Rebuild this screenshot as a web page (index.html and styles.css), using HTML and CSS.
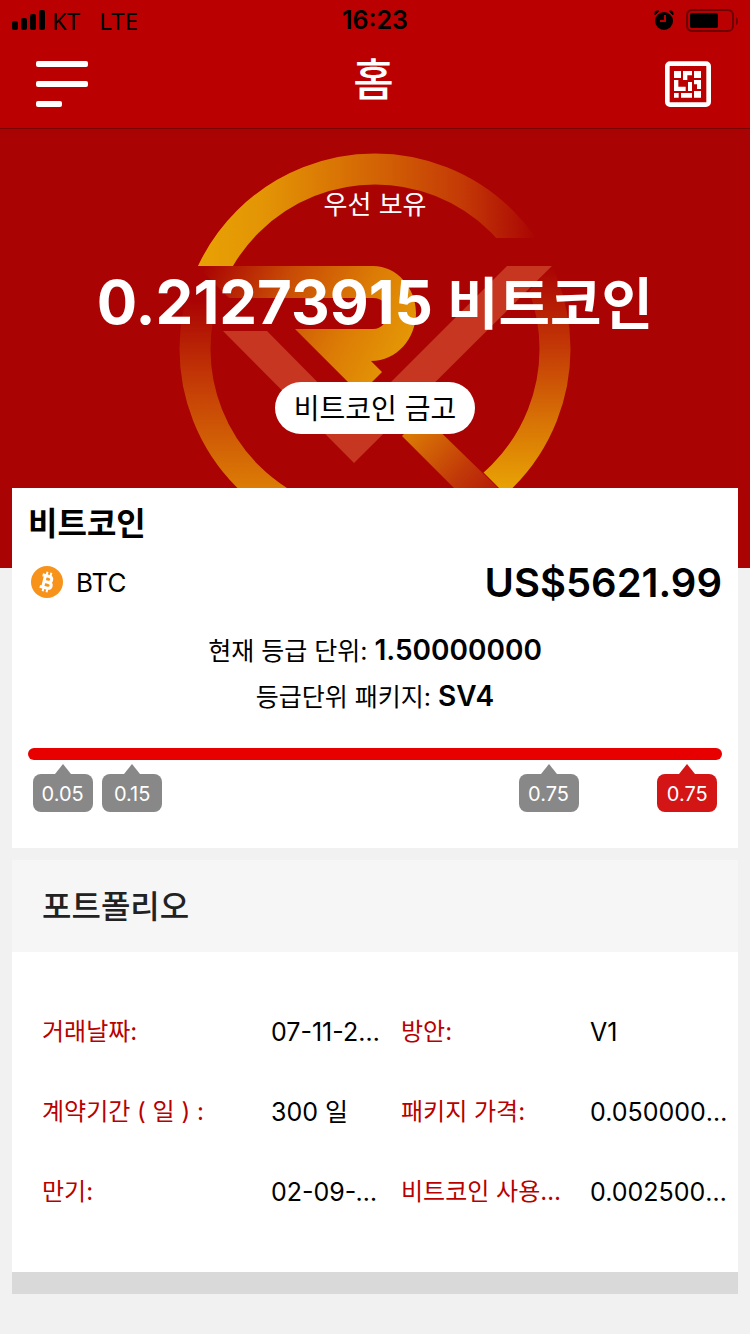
FILE: index.html
```
<!DOCTYPE html>
<html lang="ko">
<head>
    <meta charset="UTF-8">
    <meta name="viewport" content="width=device-width, initial-scale=1.0">
    <title>홈</title>
    <link rel="stylesheet" href="styles.css">
</head>
<body>
    <header class="header">
        <div class="status-bar">
            <div class="carrier">
                <svg width="33" height="20" viewBox="0 0 33 20">
                    <rect x="0" y="11" width="6" height="9" rx="2"/>
                    <rect x="9" y="8" width="6" height="12" rx="2"/>
                    <rect x="18" y="4" width="6" height="16" rx="2"/>
                    <rect x="27" y="0" width="6" height="20" rx="2"/>
                </svg>
                <span>KT</span>
                <span class="network">LTE</span>
            </div>
            <div class="time">16:23</div>
            <div class="indicators">
                <svg width="20" height="20" viewBox="0 0 20 20">
                    <circle cx="10" cy="11" r="9"/>
                    <path d="M1 5V3Q1 1 3 1H5ZM19 5V3Q19 1 17 1H15Z" stroke="#000"/>
                    <path d="M11 5V11H6" fill="none" stroke="#ba0000" stroke-width="2"/>
                </svg>
                <svg width="52" height="24" viewBox="0 0 52 24">
                    <rect x="1" y="2" width="46" height="21" rx="5" fill="none" stroke="#6c0000" stroke-width="2"/>
                    <rect x="4" y="5" width="28" height="15" rx="2"/>
                    <path d="M50 9Q52 10 52 13T50 17Z" fill="#6c0000"/>
                </svg>
            </div>
        </div>
        <nav class="navbar">
            <button class="icon-btn" aria-label="메뉴">
                <svg width="52" height="46" viewBox="0 0 52 46" fill="#fff">
                    <rect x="0" y="0" width="52" height="6" rx="2"/>
                    <rect x="0" y="20" width="52" height="6" rx="2"/>
                    <rect x="0" y="40" width="26" height="6" rx="2"/>
                </svg>
            </button>
            <h1>홈</h1>
            <button class="icon-btn" aria-label="QR 코드">
                <svg width="46" height="46" viewBox="0 0 138 138" fill="#fff">
                    <rect x="7" y="8" width="124" height="123" rx="8" fill="none" stroke="#fff" stroke-width="14"/>
                    <path d="M27 30h21v21H27zM54 30h27v13H67v14H54zM87 30h21v21H87zM27 57h13v20h22v13H27zM69 63h12v27H69zM87 57h21v27H96V70h-9zM27 96h14v14H27zM48 96h33v14H48zM87 90h21v20H87z"/>
                </svg>
            </button>
        </nav>
    </header>

    <section class="hero">
        <svg class="hero-logo" width="400" height="359" viewBox="175 129 400 359">
            <defs>
                <linearGradient id="arcTop" gradientUnits="userSpaceOnUse" x1="197" y1="0" x2="537" y2="0">
                    <stop offset="0" stop-color="#e8a204"/>
                    <stop offset="0.2" stop-color="#e39405"/>
                    <stop offset="0.55" stop-color="#d26004"/>
                    <stop offset="0.78" stop-color="#c43a06"/>
                    <stop offset="1" stop-color="#a90303"/>
                </linearGradient>
                <linearGradient id="arcLeft" gradientUnits="userSpaceOnUse" x1="0" y1="300" x2="0" y2="488">
                    <stop offset="0" stop-color="#a90303"/>
                    <stop offset="0.4" stop-color="#c23606"/>
                    <stop offset="1" stop-color="#dc7c05"/>
                </linearGradient>
                <linearGradient id="arcRight" gradientUnits="userSpaceOnUse" x1="0" y1="266" x2="0" y2="488">
                    <stop offset="0" stop-color="#a90303"/>
                    <stop offset="0.35" stop-color="#c23606"/>
                    <stop offset="0.7" stop-color="#d87305"/>
                    <stop offset="1" stop-color="#e8a204"/>
                </linearGradient>
                <linearGradient id="letter" gradientUnits="userSpaceOnUse" x1="205" y1="266" x2="400" y2="370">
                    <stop offset="0" stop-color="#a90303"/>
                    <stop offset="0.35" stop-color="#c84a05"/>
                    <stop offset="0.7" stop-color="#dc7c05"/>
                    <stop offset="1" stop-color="#e59a05"/>
                </linearGradient>
                <linearGradient id="leg" gradientUnits="userSpaceOnUse" x1="415" y1="430" x2="490" y2="500">
                    <stop offset="0" stop-color="#da7805"/>
                    <stop offset="0.6" stop-color="#c23a08"/>
                    <stop offset="1" stop-color="#b51a08"/>
                </linearGradient>
                <clipPath id="clipTop"><path d="M175 129H575V238H375V266H175Z"/></clipPath>
                <clipPath id="clipLeft"><path d="M175 266H197L375 444V560H175Z"/></clipPath>
                <clipPath id="clipRight"><path d="M420 409L552 266H580V555H566Z"/></clipPath>
            </defs>
            <g fill="none" stroke-width="31">
                <circle cx="375" cy="349" r="180" stroke="url(#arcTop)" clip-path="url(#clipTop)"/>
                <circle cx="375" cy="349" r="180" stroke="url(#arcLeft)" clip-path="url(#clipLeft)"/>
                <circle cx="375" cy="349" r="180" stroke="url(#arcRight)" clip-path="url(#clipRight)"/>
            </g>
            <path fill="url(#letter)" d="M197 266H373C397 266 416 288 416 313S397 361 371 361L382 372L360 394L295 329H373C382 329 387 322 387 313S382 298 373 298H229Z"/>
            <path fill="url(#leg)" d="M402 436L423 415L498 488H454Z"/>
            <path fill="#c63620" d="M223 331H267L354 419L507 266H552L354 463Z"/>
        </svg>
        <p class="hero-label">우선 보유</p>
        <p class="hero-amount">0.21273915 <span class="unit">비트코인</span></p>
        <button class="vault-btn">비트코인 금고</button>
    </section>

    <main class="content">
        <section class="coin-card">
            <h2>비트코인</h2>
            <div class="price-row">
                <div class="coin">
                    <svg width="34" height="34" viewBox="0 0 34 34">
                        <circle cx="17" cy="17" r="16" fill="#f7931a"/>
                        <g transform="rotate(14 17 17)" fill="none" stroke="#fff" stroke-width="3">
                            <path d="M11 11H18Q21 11 21 14T18 17H14M18 17Q22 17 22 20T18 23H11M14 11V23"/>
                            <path d="M15 7V11M19 7V11M15 23V27M19 23V27" stroke-width="2"/>
                        </g>
                    </svg>
                    <span>BTC</span>
                </div>
                <div class="price">US$5621.99</div>
            </div>
            <p class="grade">현재 등급 단위: <b>1.50000000</b></p>
            <p class="grade">등급단위 패키지: <b>SV4</b></p>
            <div class="grade-bar">
                <div class="marker" style="left: 5%">0.05</div>
                <div class="marker" style="left: 15%">0.15</div>
                <div class="marker" style="left: 75%">0.75</div>
                <div class="marker current" style="left: 95%">0.75</div>
            </div>
        </section>

        <section class="portfolio">
            <h2>포트폴리오</h2>
            <dl>
                <dt>거래날짜:</dt>
                <dd>07-11-2018</dd>
                <dt>방안:</dt>
                <dd>V1</dd>
                <dt>계약기간 ( 일 ) :</dt>
                <dd>300 일</dd>
                <dt>패키지 가격:</dt>
                <dd>0.05000000</dd>
                <dt>만기:</dt>
                <dd>02-09-2019</dd>
                <dt>비트코인 사용금액:</dt>
                <dd>0.00250000</dd>
            </dl>
        </section>
    </main>
</body>
</html>
```

FILE: styles.css
```
* {
    box-sizing: border-box;
}
body {
    margin: 0;
    font-family: Inter, "Noto Sans CJK KR", sans-serif;
    font-size: 26px;
    background-color: #f1f1f1;
    color: #000;
}
h1, h2, p, dl, dd {
    margin: 0;
}
svg {
    display: block;
}
button {
    font-family: inherit;
    border: none;
    cursor: pointer;
}
.header {
    background-color: #ba0000;
    border-bottom: 1px solid #7a0000;
}
.status-bar {
    display: grid;
    grid-template-columns: 1fr auto 1fr;
    align-items: center;
    height: 40px;
    padding: 0 12px;
    font-size: 24px;
}
.carrier {
    display: flex;
    align-items: center;
    gap: 7px;
    font-family: "Noto Sans", sans-serif;
}
.network {
    margin-left: 12px;
}
.time {
    font-size: 25px;
    font-weight: 600;
}
.indicators {
    display: flex;
    align-items: center;
    justify-content: flex-end;
    gap: 12px;
}
.navbar {
    display: grid;
    grid-template-columns: 1fr auto 1fr;
    align-items: center;
    height: 88px;
    padding: 0 39px 0 36px;
}
.navbar h1 {
    font-size: 44px;
    font-weight: 500;
    line-height: 60px;
    padding-bottom: 8px;
    color: white;
}
.icon-btn {
    padding: 0;
    background: none;
}
.icon-btn:last-child {
    justify-self: end;
}
.hero {
    position: relative;
    padding: 56px 12px 134px;
    background-color: #a90303;
    color: white;
    text-align: center;
}
.hero-logo {
    position: absolute;
    top: 0;
    left: 50%;
    margin-left: -200px;
}
.hero-label {
    position: relative;
    line-height: 40px;
}
.hero-amount {
    position: relative;
    margin: 37px 0 40px;
    font-size: 60px;
    font-weight: 700;
    line-height: 80px;
}
.unit {
    font-size: 56px;
    line-height: 1;
}
.vault-btn {
    position: relative;
    display: block;
    width: 200px;
    height: 52px;
    margin: 0 auto;
    padding: 0 0 2px;
    border-radius: 26px;
    background-color: white;
    color: black;
    font-size: 28px;
}
.content {
    position: relative;
    margin: -80px 12px 40px;
}
.coin-card {
    padding: 16px 16px 88px;
    background-color: white;
}
.coin-card h2 {
    font-size: 32px;
    font-weight: 700;
    line-height: 40px;
}
.price-row {
    display: flex;
    align-items: center;
    justify-content: space-between;
    height: 76px;
    margin-bottom: 8px;
}
.coin {
    display: flex;
    align-items: center;
    gap: 12px;
    padding-left: 2px;
}
.price {
    font-size: 40px;
    font-weight: 600;
}
.grade {
    font-size: 25px;
    line-height: 46px;
    text-align: center;
}
.grade b {
    font-size: 28px;
    font-weight: 600;
    line-height: 1;
}
.grade-bar {
    position: relative;
    height: 12px;
    margin-top: 28px;
    border-radius: 6px;
    background-color: #e80000;
}
.marker {
    position: absolute;
    top: 26px;
    width: 60px;
    height: 38px;
    margin-left: -30px;
    border-radius: 8px;
    background-color: #888;
    color: white;
    font-size: 20px;
    line-height: 40px;
    text-align: center;
}
.marker::before {
    content: "";
    position: absolute;
    top: -10px;
    left: 22px;
    border: 8px solid transparent;
    border-top: none;
    border-bottom: 10px solid #888;
}
.marker.current {
    background-color: #d31515;
}
.marker.current::before {
    border-bottom-color: #d31515;
}
.portfolio {
    margin-top: 12px;
    background-color: white;
    border-bottom: 22px solid #d9d9d9;
}
.portfolio h2 {
    padding: 2px 30px 0;
    background-color: #f6f6f6;
    color: #222;
    font-size: 32px;
    font-weight: 500;
    line-height: 90px;
}
.portfolio dl {
    display: grid;
    grid-template-columns: 215fr 116fr 175fr 140fr;
    column-gap: 14px;
    padding: 40px 8px 40px 30px;
    line-height: 80px;
}
.portfolio dt, .portfolio dd {
    overflow: hidden;
    white-space: nowrap;
    text-overflow: ellipsis;
}
.portfolio dt {
    color: #b80000;
    font-size: 24px;
}
.portfolio dd {
    font-size: 25px;
}
```
